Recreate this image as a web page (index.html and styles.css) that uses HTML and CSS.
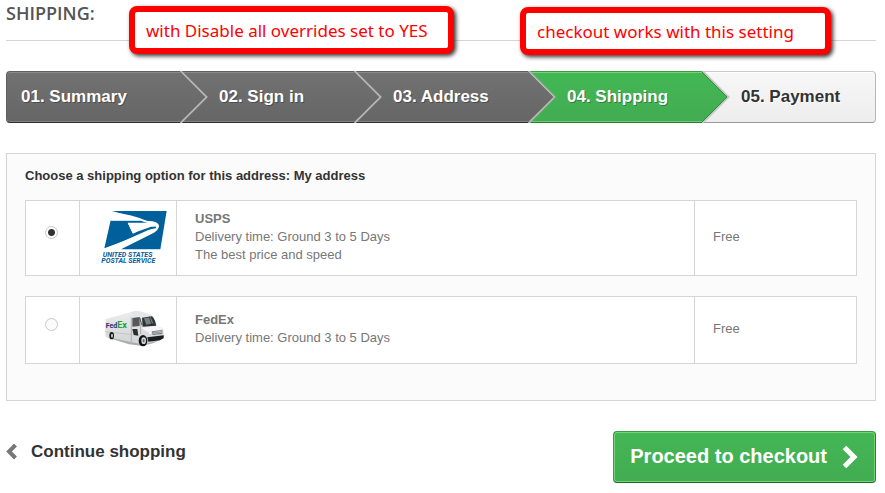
FILE: index.html
```
<!DOCTYPE html>
<html lang="en">
<head>
    <meta charset="UTF-8">
    <meta name="viewport" content="width=device-width, initial-scale=1.0">
    <title>Shipping</title>
    <link rel="stylesheet" href="styles.css">
</head>
<body>
    <h1 class="page-heading">Shipping:</h1>
    <div class="note note-left">with Disable all overrides set to YES</div>
    <div class="note note-right">checkout works with this setting</div>

    <!-- Steps -->
    <ul class="steps">
        <li class="step done">
            <a href="#summary">01. Summary</a>
            <svg class="arrow" viewBox="0 0 29 52">
                <path class="fill" d="M0 1L26 26L0 51z"/>
                <path class="edge-dark" d="M-1 0L25 26L-1 52"/>
                <path class="edge-light" d="M0.500 0L26.500 26L0.500 52"/>
            </svg>
        </li>
        <li class="step done">
            <a href="#signin">02. Sign in</a>
            <svg class="arrow" viewBox="0 0 29 52">
                <path class="fill" d="M0 1L26 26L0 51z"/>
                <path class="edge-dark" d="M-1 0L25 26L-1 52"/>
                <path class="edge-light" d="M0.500 0L26.500 26L0.500 52"/>
            </svg>
        </li>
        <li class="step done">
            <a href="#address">03. Address</a>
            <svg class="arrow" viewBox="0 0 29 52">
                <path class="fill" d="M0 1L26 26L0 51z"/>
                <path class="edge-dark" d="M-1 0L25 26L-1 52"/>
                <path class="edge-light" d="M0.500 0L26.500 26L0.500 52"/>
            </svg>
        </li>
        <li class="step current">
            <span>04. Shipping</span>
            <svg class="arrow" viewBox="0 0 29 52">
                <defs>
                    <linearGradient id="green" x1="0" y1="0" x2="0" y2="1">
                        <stop offset="0" stop-color="#43b754"/>
                        <stop offset="1" stop-color="#42ac52"/>
                    </linearGradient>
                    <linearGradient id="gray" x1="0" y1="0" x2="0" y2="1">
                        <stop offset="0" stop-color="#727171"/>
                        <stop offset="1" stop-color="#666666"/>
                    </linearGradient>
                </defs>
                <path class="fill" d="M0 1L26 26L0 51z"/>
                <path class="edge-light" d="M0.500 0L26.500 26L0.500 52"/>
                <path class="edge-dark" d="M-1 0L25 26L-1 52"/>
            </svg>
        </li>
        <li class="step todo"><span>05. Payment</span></li>
    </ul>

    <form>
        <div class="delivery">
            <p class="delivery-title">Choose a shipping option for this address: My address</p>
            <table class="option">
                <tr>
                    <td class="option-radio">
                        <input type="radio" name="carrier" id="usps" aria-label="USPS" checked>
                    </td>
                    <td class="option-logo">
                        <svg width="66" height="53" viewBox="0 0 198 159">
                            <path fill="#00609c" d="M33 0H197L178 115H60L150 70Q170 62 174 46Q172 34 155 31L100 27Q82 12 33 0z"/>
                            <path fill="#00609c" d="M29 28H122L146 35H80L95 67L142 50Q150 46 166 47Q166 55 150 60L10 112z"/>
                            <path fill="#fff" d="M33 4Q90 10 136 29L160 36Q169 38 170 50L166 52Q165 42 158 42L130 33L120 29H29z"/>
                            <path fill="#fff" d="M82 39H152Q162 42 162 46H146Q138 46 96 68z"/>
                            <path fill="none" stroke="#fff" stroke-width="3" d="M143 37H166Q174 39 171 48L168 55"/>
                            <path fill="#fff" d="M12 115L100 76L142 57Q155 53 169 52Q166 60 153 64L44 115z"/>
                            <text class="usps-text" x="5" y="137">UNITED STATES</text>
                            <text class="usps-text" x="1" y="156">POSTAL SERVICE</text>
                        </svg>
                    </td>
                    <td class="option-info">
                        <label for="usps"><strong>USPS</strong><br>Delivery time: Ground 3 to 5 Days<br>The best price and speed</label>
                    </td>
                    <td class="option-price">Free</td>
                </tr>
            </table>
            <table class="option">
                <tr>
                    <td class="option-radio">
                        <input type="radio" name="carrier" id="fedex" aria-label="FedEx">
                    </td>
                    <td class="option-logo">
                        <svg width="66" height="38" viewBox="0 0 198 114">
                            <defs>
                                <linearGradient id="body" x1="0" y1="0" x2="0" y2="1">
                                    <stop offset="0" stop-color="#ececec"/>
                                    <stop offset="1" stop-color="#d2d3d4"/>
                                </linearGradient>
                            </defs>
                            <!-- ground shadow -->
                            <path fill="#777" opacity=".6" d="M16 82L60 84L120 92L184 86L158 99L124 108L84 103z"/>
                            <path fill="url(#body)" d="M14 27L98 4Q112 2 120 5L154 16L164 48L184 54Q189 58 188 86L174 91L140 100L126 103L92 97L14 80Q11 56 14 27z"/>
                            <path fill="#e4e5e5" d="M98 4Q112 2 120 5L154 16L98 20L90 8z"/>
                            <path fill="#c3c4c5" d="M12 64L92 72V75L12 67z"/>
                            <path fill="none" stroke="#999" stroke-width="2" d="M91 22V96M119 24V72"/>
                            <!-- door and windscreen -->
                            <path fill="#55595b" d="M94 24L116 21V48L94 50z"/>
                            <path fill="#292e30" d="M94 57H109L112 77L98 75z"/>
                            <path fill="#2e3335" d="M123 23L153 19Q162 27 166 47L125 50z"/>
                            <path fill="#758083" d="M129 25L149 22L157 40L136 44z"/>
                            <path stroke="#202426" stroke-width="2" d="M116 23L123 46M145 20L153 46"/>
                            <!-- hood and bumper -->
                            <path fill="#f5f5f5" d="M121 53L165 48L184 54L180 61L138 65z"/>
                            <path fill="#707679" d="M153 64L184 60V72L155 75z"/>
                            <path stroke="#dadada" stroke-width="2" d="M156 67L184 63M157 71L184 67"/>
                            <circle fill="#f8f8f8" cx="147" cy="68" r="4"/>
                            <path fill="#1b1e20" d="M139 82L188 76V84L177 91L142 95z"/>
                            <ellipse fill="#151719" cx="32" cy="77" rx="7" ry="11"/>
                            <ellipse fill="#c5c7c9" cx="33" cy="77" rx="3" ry="6"/>
                            <ellipse fill="#111315" cx="126" cy="92" rx="13" ry="17"/>
                            <ellipse fill="#d6d8d9" cx="128" cy="92" rx="7" ry="10"/>
                            <ellipse fill="#66696b" cx="128" cy="92" rx="3" ry="5"/>
                            <text class="fedex-text" x="14" y="54"><tspan class="fedex-fed">Fed</tspan><tspan class="fedex-ex">Ex</tspan></text>
                        </svg>
                    </td>
                    <td class="option-info">
                        <label for="fedex"><strong>FedEx</strong><br>Delivery time: Ground 3 to 5 Days</label>
                    </td>
                    <td class="option-price">Free</td>
                </tr>
            </table>
        </div>

        <div class="cart-nav">
            <a class="continue" href="#shop">
                <svg width="11" height="16" viewBox="0 0 11 16"><path fill="none" stroke="#777" stroke-width="4" d="M9.500 1L3 7.500L9.500 14"/></svg>
                Continue shopping
            </a>
            <button type="button" class="checkout">
                Proceed to checkout
                <svg width="16" height="24" viewBox="0 0 16 24"><path fill="none" stroke="#fff" stroke-width="5" d="M2.500 3.500L12 13L2.500 22.500"/></svg>
            </button>
        </div>
    </form>
</body>
</html>
```
FILE: styles.css
```
* {
    box-sizing: border-box;
}
body {
    margin: 0;
    padding: 0 9px 10px 6px;
    background: #fff;
    color: #777;
    font: 13px/18px "Liberation Sans", Arial, sans-serif;
}
.page-heading {
    margin: 0 0 30px;
    padding: 2px 0 16px;
    border-bottom: 1px solid #d6d4d4;
    color: #555454;
    font: 600 18px/22px "Open Sans", sans-serif;
    text-transform: uppercase;
}

/* red notes lying over the heading */
.note {
    position: absolute;
    height: 48px;
    border: 6px solid #f00;
    border-radius: 8px;
    background: #fff;
    box-shadow: 2px 2px 4px #333;
    color: #f00;
    font: 17px/38px "Noto Sans", sans-serif;
    padding: 0 11px;
    white-space: nowrap;
}
.note-left {
    top: 6px;
    left: 129px;
    width: 325px;
}
.note-right {
    top: 7px;
    left: 520px;
    width: 311px;
}

.steps {
    display: flex;
    margin: 0 0 30px;
    padding: 0;
    list-style: none;
}
.step {
    position: relative;
    width: 20%;
    height: 52px;
    padding-left: 39px;
    border: 1px solid;
    border-width: 1px 0;
    color: #fff;
    font-size: 17px;
    font-weight: bold;
    line-height: 50px;
    text-shadow: 1px 1px rgba(0, 0, 0, 0.3);
}
.step:first-child {
    padding-left: 14px;
    border-left-width: 1px;
    border-radius: 4px 0 0 4px;
}
.step:last-child {
    border-right-width: 1px;
    border-radius: 0 4px 4px 0;
}
.step a {
    color: inherit;
    text-decoration: none;
}
.done {
    background: linear-gradient(#727171, #666);
    border-color: #5f5f5f #5f5f5f #2e2e2e;
    box-shadow: inset 0 1px #8b8a8a, inset 0 -1px #828282;
}
.current {
    background: linear-gradient(#43b754, #42ac52);
    border-color: #399b49 #399b49 #247f32;
    box-shadow: inset 0 1px #74d578, inset 0 -1px #74c776;
}
.todo {
    background: linear-gradient(#f7f7f7, #ededed);
    border-color: #cacaca #b7b7b7 #9a9a9a;
    box-shadow: inset 0 1px #fff;
    color: #333;
    text-shadow: 1px 1px #fff;
}
.arrow {
    position: absolute;
    z-index: 1;
    top: -1px;
    left: 100%;
    width: 29px;
    height: 52px;
}
.arrow path {
    fill: none;
}
.arrow .edge-dark {
    stroke: #444;
}
.arrow .edge-light {
    stroke: #b4b4b4;
    stroke-width: 2;
}
.done .arrow .fill {
    fill: url(#gray);
}
.current .arrow .fill {
    fill: url(#green);
}
.current .arrow .edge-dark {
    stroke: #318c40;
}
.current .arrow .edge-light {
    stroke: #c4c4c4;
}

.delivery {
    margin-bottom: 30px;
    padding: 13px 18px 16px;
    border: 1px solid #d6d4d4;
    background: #fbfbfb;
}
.delivery-title {
    margin: 0 0 15px;
    color: #333;
    font-weight: bold;
}
.option {
    width: 100%;
    margin-bottom: 20px;
    border-collapse: collapse;
    table-layout: fixed;
    background: #fff;
}
.option td {
    height: 67px;
    padding: 9px 18px 11px;
    border: 1px solid #d6d4d4;
}
.option .option-radio {
    width: 54px;
    padding-bottom: 21px;
}
.option .option-logo {
    width: 97px;
    padding: 0 0 2px 21px;
}
.option-price {
    width: 162px;
}
.option svg,
.option label {
    display: block;
}
.option input {
    display: block;
    appearance: none;
    width: 13px;
    height: 13px;
    margin: 0 1px;
    border: 1px solid #c8c8c8;
    border-radius: 50%;
    background: #fbfbfb;
}
.option input:checked {
    background: radial-gradient(circle, #333 3px, #fff 4px);
}
.usps-text {
    fill: #00609c;
    font: italic bold 21px Roboto, sans-serif;
}
.fedex-text {
    font: bold 21px Roboto, sans-serif;
}
.fedex-fed {
    fill: #38296b;
}
.fedex-ex {
    fill: #17a53c;
    font-size: 27px;
}

.cart-nav {
    display: flex;
    justify-content: space-between;
    align-items: flex-start;
}
.continue {
    display: flex;
    align-items: center;
    gap: 14px;
    padding-top: 10px;
    color: #333;
    font-size: 17px;
    font-weight: bold;
    line-height: 22px;
    text-decoration: none;
}
.checkout {
    display: flex;
    align-items: center;
    gap: 15px;
    height: 52px;
    padding: 0 17px 2px 16px;
    border: 1px solid;
    border-color: #399a49 #247f32 #1a6d27 #399a49;
    border-radius: 4px;
    background: linear-gradient(#43b754, #42ac52);
    box-shadow: inset 0 0 0 1px #74d578;
    color: #fff;
    font: bold 20px/24px "Liberation Sans", Arial, sans-serif;
    cursor: pointer;
}
```
